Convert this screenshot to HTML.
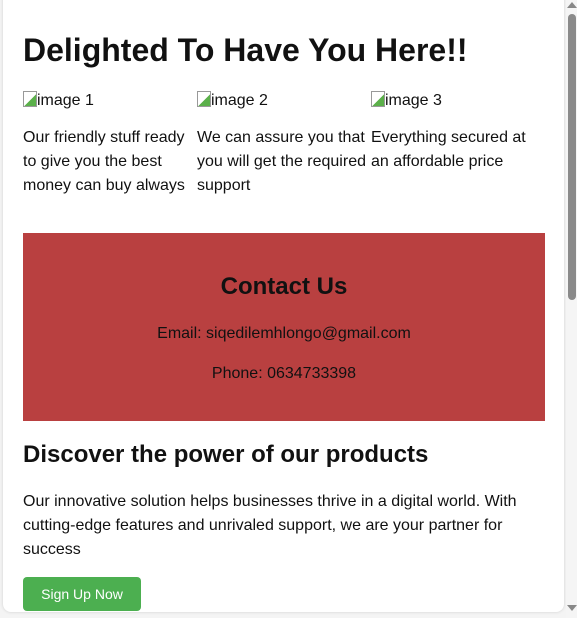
<!DOCTYPE html>
<html><head><style>
html,body{margin:0;padding:0;width:577px;height:618px;overflow:hidden;background:#f4f4f4;font-family:"Liberation Sans",Arial,sans-serif;color:#111}
.card{position:absolute;left:3px;top:-10px;width:561px;height:622px;background:#fff;border-radius:8px;box-shadow:0 0 3px rgba(0,0,0,.15)}
.abs{position:absolute;margin:0;white-space:nowrap}
h1{font-size:32px;font-weight:bold}
h2{font-size:24px;font-weight:bold}
.t{font-size:16px;line-height:24px}
.img{font-size:16px;line-height:20px}
.img i{display:inline-block;width:14px;height:16px;vertical-align:-2px;border:1px solid #999;box-sizing:border-box;background:linear-gradient(135deg,#fff 55%,#5bb04a 56%)}
.red{position:absolute;left:23px;top:233px;width:522px;height:188px;background:#b94040}
.btn{position:absolute;left:23px;top:577px;width:118px;height:34px;background:#4caf50;border-radius:4px;color:#fff;font-size:14px;line-height:34px;text-align:center}
.sb{position:absolute;left:566px;top:0;width:11px;height:618px;background:#f5f5f5}
.th{position:absolute;left:568px;top:14px;width:8px;height:286px;background:#8a8a8a;border-radius:4px}
</style></head><body>
<div class="card"></div>
<h1 class="abs" style="left:23px;top:31px;line-height:38px">Delighted To Have You Here!!</h1>
<div class="abs img" style="left:23px;top:91px"><i></i>image 1</div>
<div class="abs img" style="left:197px;top:91px"><i></i>image 2</div>
<div class="abs img" style="left:371px;top:91px"><i></i>image 3</div>
<div class="abs t" style="left:23px;top:126px">Our friendly stuff ready<br>to give you the best<br>money can buy always</div>
<div class="abs t" style="left:197px;top:126px">We can assure you that<br>you will get the required<br>support</div>
<div class="abs t" style="left:371px;top:126px">Everything secured at<br>an affordable price</div>
<div class="red"></div>
<h2 class="abs" style="left:23px;width:522px;text-align:center;top:272px;line-height:30px">Contact Us</h2>
<div class="abs t" style="left:23px;width:522px;text-align:center;top:322px">Email: siqedilemhlongo@gmail.com</div>
<div class="abs t" style="left:23px;width:522px;text-align:center;top:362px">Phone: 0634733398</div>
<h2 class="abs" style="left:23px;top:440px;line-height:30px">Discover the power of our products</h2>
<div class="abs t" style="left:23px;top:490px">Our innovative solution helps businesses thrive in a digital world. With<br>cutting-edge features and unrivaled support, we are your partner for<br>success</div>
<div class="btn">Sign Up Now</div>
<div class="sb"></div>
<div class="th"></div>
<div style="position:absolute;left:567px;top:2px;width:0;height:0;border-left:5px solid transparent;border-right:5px solid transparent;border-bottom:6px solid #888"></div>
<div style="position:absolute;left:567px;top:605px;width:0;height:0;border-left:5px solid transparent;border-right:5px solid transparent;border-top:6px solid #888"></div>
</body></html>
